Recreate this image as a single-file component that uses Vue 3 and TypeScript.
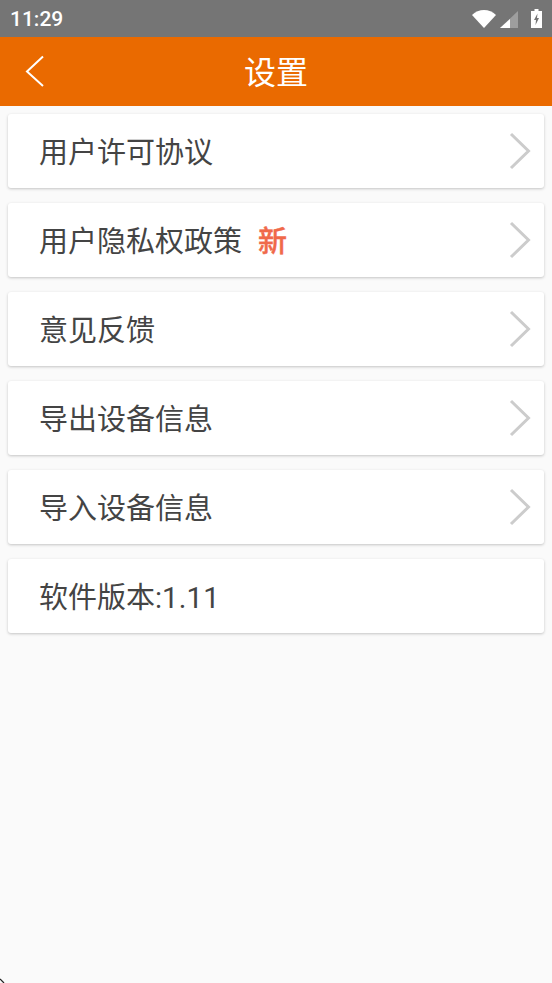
<script setup lang="ts">
interface Row { label: string; version?: string; badge?: string; arrow: boolean }
const rows: Row[] = [
  { label: '用户许可协议', arrow: true },
  { label: '用户隐私权政策', badge: '新', arrow: true },
  { label: '意见反馈', arrow: true },
  { label: '导出设备信息', arrow: true },
  { label: '导入设备信息', arrow: true },
  { label: '软件版本:', version: '1.11', arrow: false },
]
</script>

<template>
  <div class="screen">
    <div class="status">
      <span class="time">11:29</span>
      <div class="status-icons">
        <svg class="wifi" width="24" height="18" viewBox="0 0 24 18"><path d="M0 5C3.5 1.800 7.500 0 12 0S20.500 1.800 24 5L12 18Z" fill="#fff"/></svg>
        <svg class="signal" width="18" height="17" viewBox="0 0 18 17"><path d="M18 0V17H0Z" fill="#fff" fill-opacity=".3"/><path d="M10 8.500V17H0L10 8Z" fill="#fff"/></svg>
        <svg class="battery" width="11" height="19" viewBox="0 0 11 19"><path d="M3.500 0H7.500V2H11V19H0V2H3.500Z" fill="#fff"/><path d="M6.500 4.500L3 11H5L4.500 16L8 9H6Z" fill="#757575"/></svg>
      </div>
    </div>
    <header class="bar">
      <svg class="back" width="20" height="32" viewBox="0 0 20 32"><path d="M18 1.500L2 16.500L18 31" fill="none" stroke="#fff" stroke-width="2"/></svg>
      <h1>设置</h1>
    </header>
    <main class="list">
      <div v-for="row in rows" :key="row.label" class="card">
        <span class="label">{{ row.label }}<span v-if="row.version" class="version">{{ row.version }}</span></span>
        <span v-if="row.badge" class="badge">{{ row.badge }}</span>
        <svg v-if="row.arrow" class="chev" width="22" height="38" viewBox="0 0 22 38"><path d="M2 2L19.500 19L2 36" fill="none" stroke="#ccc" stroke-width="3"/></svg>
      </div>
    </main>
    <svg class="corner" width="5" height="5" viewBox="0 0 5 5"><path d="M0 1L4 5" stroke="#222" stroke-width="1.200"/></svg>
  </div>
</template>

<style>
html, body { margin: 0; background: #fafafa; }
</style>

<style scoped>
.screen {
  width: 552px;
  height: 983px;
  overflow: hidden;
  background: #fafafa;
  display: flex;
  flex-direction: column;
  position: relative;
  font-family: Roboto, "Noto Sans CJK SC", sans-serif;
}
.status {
  height: 37px;
  background: #757575;
  display: flex;
  align-items: center;
  justify-content: space-between;
  padding: 0 10px;
  color: #fff;
}
.time { font-size: 21px; font-weight: 500; }
.status-icons { display: flex; align-items: center; }
.signal { margin-left: 4px; margin-top: 1px; }
.battery { margin-left: 13px; }
.bar {
  height: 69px;
  background: #ea6a00;
  display: flex;
  align-items: center;
  justify-content: center;
  position: relative;
}
.back { position: absolute; left: 25px; top: 18px; }
h1 {
  margin: 0 0 4px;
  color: #fff;
  font-size: 32px;
  font-weight: 400;
}
.list {
  padding: 8px;
  display: flex;
  flex-direction: column;
  gap: 15px;
}
.card {
  height: 74px;
  box-sizing: border-box;
  background: #fff;
  border-radius: 3px;
  box-shadow: 0 1px 3px rgba(0, 0, 0, 0.22);
  display: flex;
  align-items: center;
  padding: 0 13px 3px 31px;
  color: #444;
}
.label { font-size: 29px; font-weight: 400; }
.version { letter-spacing: 0.3px; }
.badge { margin-left: 16px; margin-right: -1px; color: #f0694a; font-size: 29px; font-weight: 500; -webkit-text-stroke: 0.4px #f0694a; }
.chev { margin-left: auto; margin-top: 3px; }
.corner { position: absolute; left: 0; bottom: 0; }
</style>
